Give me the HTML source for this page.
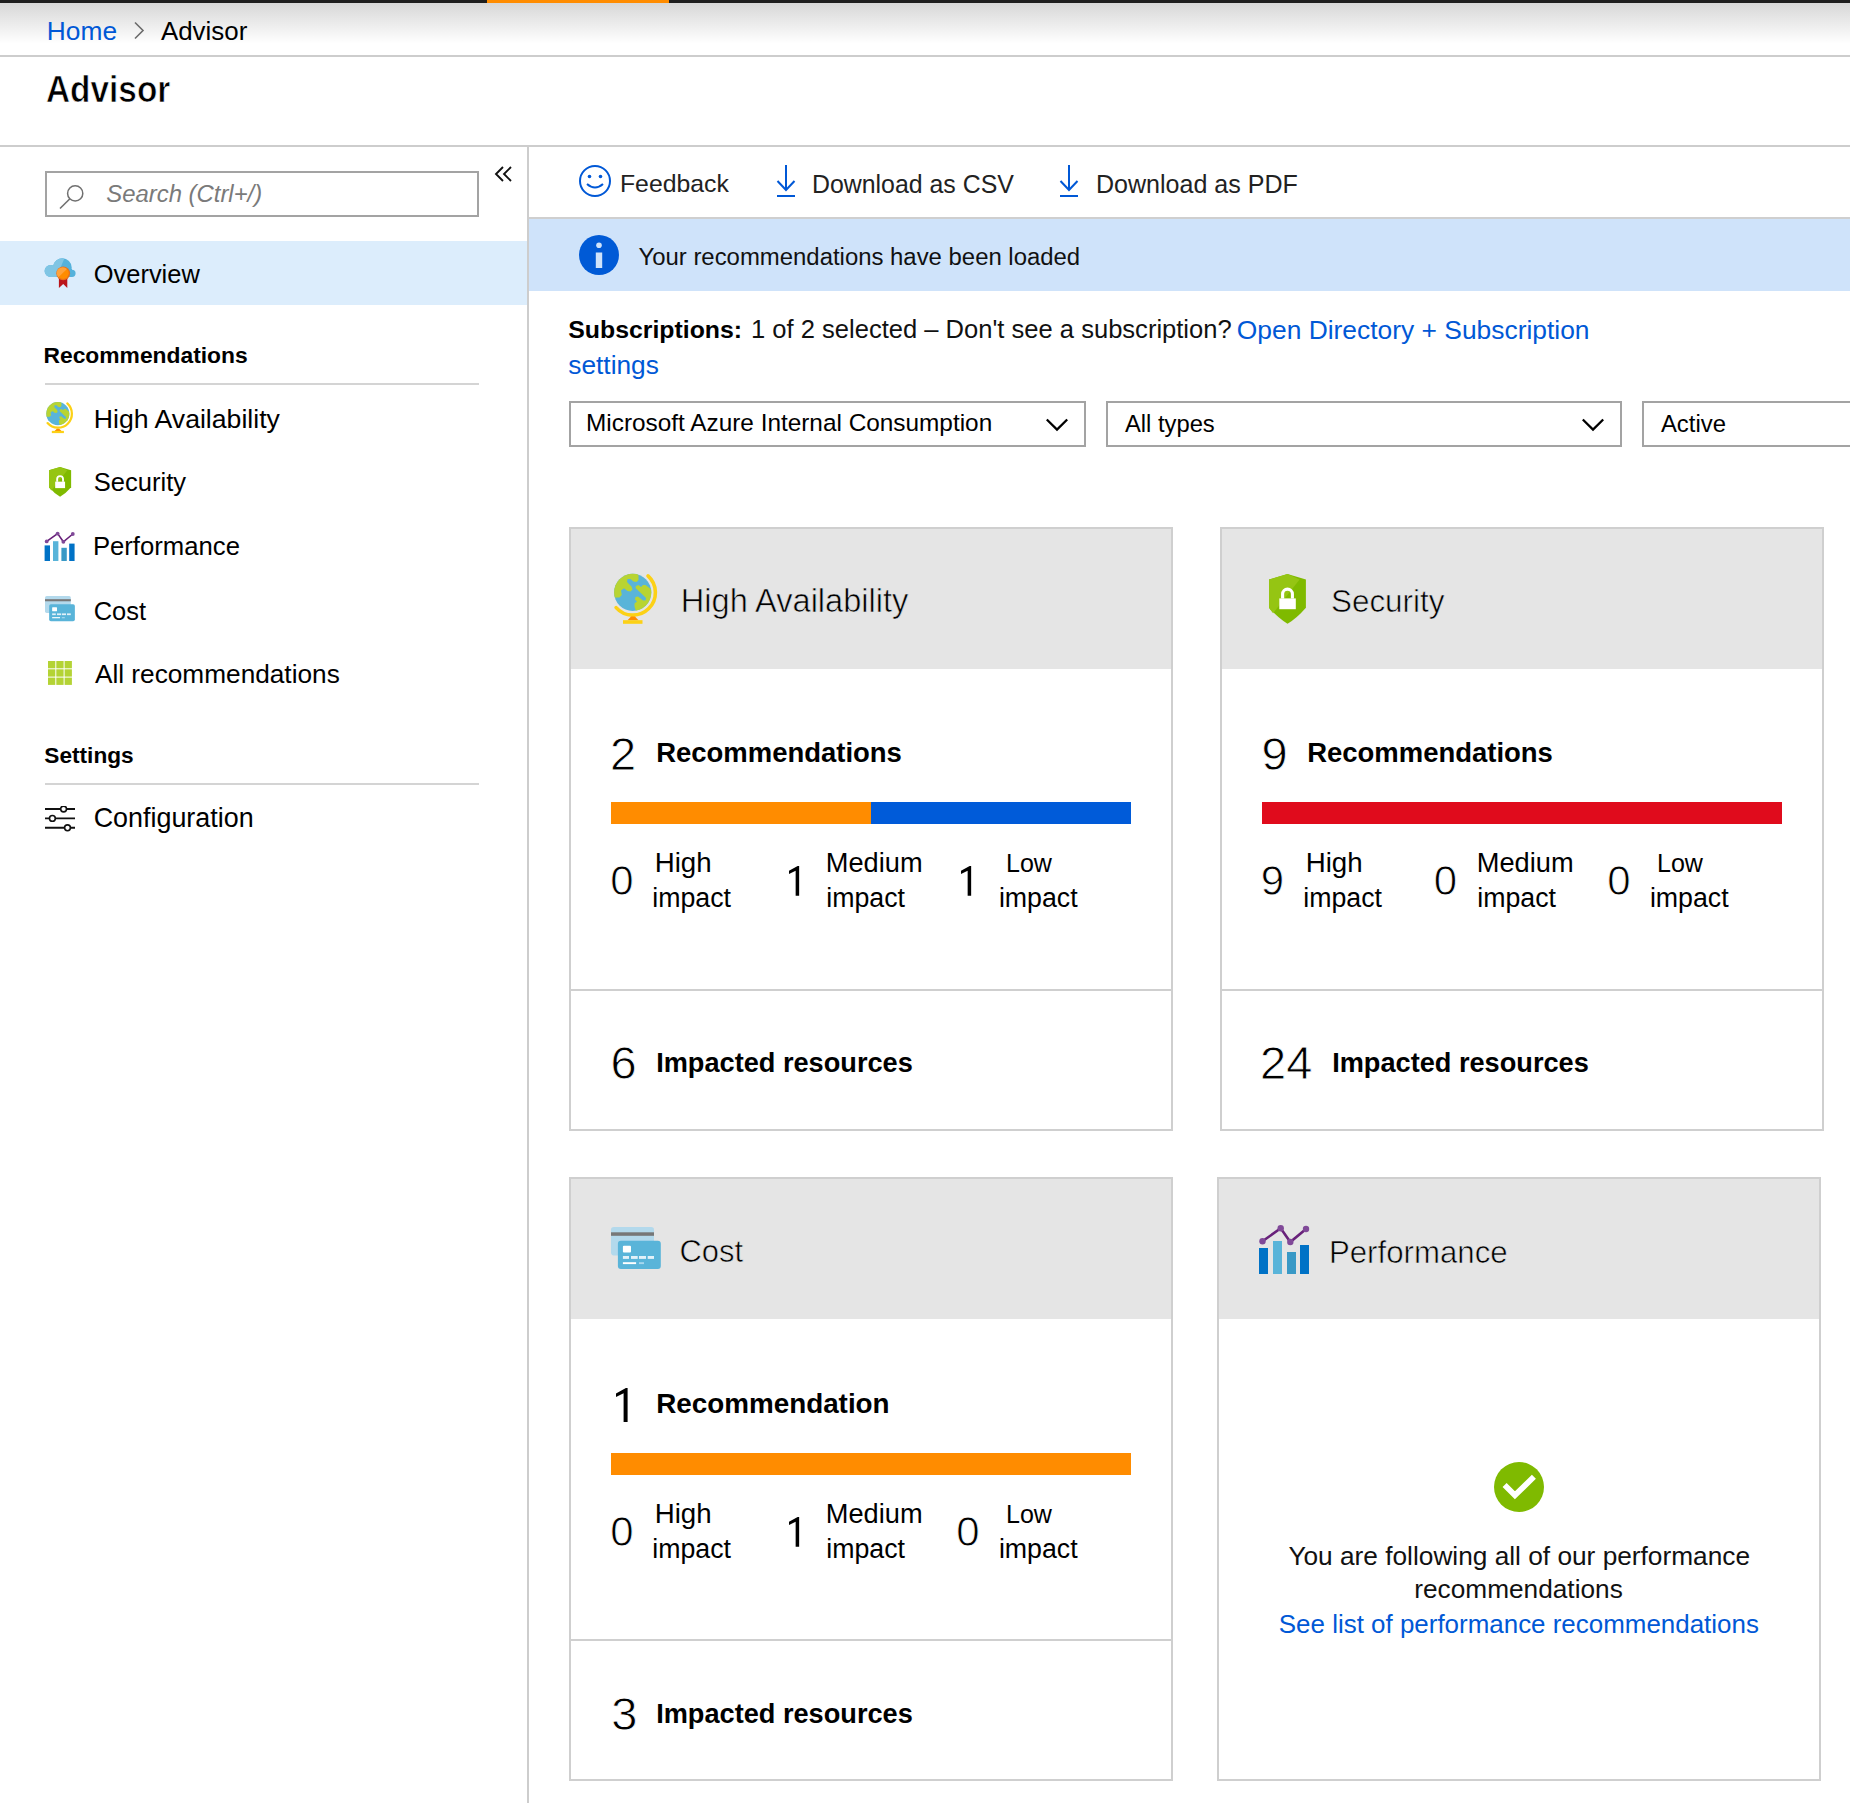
<!DOCTYPE html>
<html><head><meta charset="utf-8"><style>
html,body{margin:0;padding:0;background:#fff;width:1850px;height:1803px;overflow:hidden;}
body{position:relative;font-family:"Liberation Sans",sans-serif;}
div{position:absolute;}
.t{white-space:nowrap;line-height:1;}
</style></head><body>
<div style="left:0px;top:0px;width:1850px;height:3px;background:#1e1e1e;"></div>
<div style="left:487px;top:0px;width:182px;height:3px;background:#ff8c00;"></div>
<div style="left:0px;top:3px;width:1850px;height:52px;background:linear-gradient(#d7d7d7,#ffffff 78%);"></div>
<div style="left:0px;top:55px;width:1850px;height:2px;background:#cdcdcd;"></div>
<div style="left:0px;top:145px;width:1850px;height:2px;background:#cdcdcd;"></div>
<div style="left:527px;top:147px;width:2px;height:1656px;background:#cdcdcd;"></div>
<div class="t" style="left:46.84px;top:17.70px;font-size:26.33px;color:#0058d6;">Home</div>
<svg style="position:absolute;left:133px;top:21px" width="12" height="19" viewBox="0 0 12 19"><path d="M2 1.5 L10 9.5 L2 17.5" fill="none" stroke="#6b6b6b" stroke-width="1.6"/></svg>
<div class="t" style="left:160.95px;top:18.66px;font-size:25.9px;color:#000;">Advisor</div>
<div class="t" style="left:46.17px;top:71.51px;font-size:36px;font-weight:700;color:#000;-webkit-text-stroke:0.7px #fff;transform:scaleX(0.9272);transform-origin:0 0;">Advisor</div>
<div style="left:45px;top:171px;width:434px;height:46px;background:#fff;border:2px solid #a3a3a3;box-sizing:border-box;"></div>
<svg style="position:absolute;left:56.5px;top:182px" width="30" height="30" viewBox="0 0 30 30"><circle cx="18.2" cy="11.4" r="7.6" fill="none" stroke="#707070" stroke-width="1.5"/><path d="M12.9 16.7 L3 26.5" stroke="#707070" stroke-width="1.6"/></svg>
<div class="t" style="left:106.32px;top:182.27px;font-size:23.89px;font-style:italic;color:#7a7a7a;">Search (Ctrl+/)</div>
<svg style="position:absolute;left:493px;top:164.5px" width="22" height="20" viewBox="0 0 22 20"><path d="M10 2 L3 9 L10 16 M18 2 L11 9 L18 16" fill="none" stroke="#111" stroke-width="1.9"/></svg>
<div style="left:0px;top:241px;width:527px;height:64px;background:#dcedfc;"></div>
<svg style="position:absolute;left:44px;top:257px;overflow:visible" width="32.00" height="32.00" viewBox="0 0 32 32"><defs><clipPath id="ovc"><circle cx="6.6" cy="13.9" r="6"/><circle cx="18.4" cy="10.5" r="9.3"/><circle cx="28" cy="16.3" r="3.6"/><rect x="6.6" y="12" width="21.4" height="7.9"/></clipPath></defs><g clip-path="url(#ovc)"><rect x="0" y="0" width="32" height="20" fill="#55b2db"/><path d="M0 0 L21 0 L12.5 20 L0 20 Z" fill="#7fc5e4"/></g><path d="M14.9 21 L14.9 31 L19.2 27 L23.3 31 L23.3 21 Z" fill="#ba141a"/><circle cx="19.2" cy="16.3" r="6.9" fill="#e8701a"/><circle cx="19.2" cy="16.3" r="5.6" fill="#ff8c00"/><path d="M14.3 20.2 A5.6 5.6 0 0 1 23 12.1 Z" fill="#ffa23a"/></svg>
<div class="t" style="left:93.79px;top:262.44px;font-size:25.45px;color:#000;">Overview</div>
<div class="t" style="left:43.47px;top:343.65px;font-size:22.84px;font-weight:700;color:#000;">Recommendations</div>
<div style="left:45px;top:383px;width:434px;height:2px;background:#d4d4d4;"></div>
<svg style="position:absolute;left:44.76px;top:400.7px;overflow:visible" width="29.76" height="33.48" viewBox="0 0 48 54"><defs><clipPath id="gcs"><circle cx="20.7" cy="20.4" r="18.6"/></clipPath></defs><circle cx="20.7" cy="20.4" r="18.6" fill="#59b4d9"/><g clip-path="url(#gcs)" fill="#b8d432"><path d="M-1 27 L0 13 L6 4 L14 0 L24 -1 L26.5 3 L26.5 8 L24.5 10 L21.5 9.5 L18.5 7 L15.5 7 L15 10 L19.5 14.5 L20.5 17.5 L18.5 19.5 L15.5 19 L12 16.3 L9 18.5 L9.8 23 L7.5 25.5 L4 25.5 Z"/><path d="M23.5 16 L24 14 L26.5 13 L29 15 L31 13 L33.5 13 L40 18 L41 26 L38 33 L32 39 L24.5 41 L22.5 34.5 L22.5 31.5 L25 29.5 L23 27.5 L23.5 25 L26 24.5 L31 28.5 L33.5 28.5 L34 26 L32 24 Z"/></g><path d="M36.0 3.95 A22.5 22.5 0 1 1 4.1 35.6" fill="none" stroke="#fcd116" stroke-width="3.6" stroke-linecap="round"/><path d="M19 44.6 L23 44.6 L26.5 48.3 L15.5 48.3 Z" fill="#ff8c00"/><rect x="11" y="48.2" width="19.5" height="3.6" fill="#fcd116"/></svg>
<div class="t" style="left:93.81px;top:405.73px;font-size:26.65px;color:#000;">High Availability</div>
<svg style="position:absolute;left:49px;top:466.7px;overflow:visible" width="22.20" height="30.00" viewBox="0 0 37 50"><path d="M18.5 0 L36.9 5.6 L36.9 33.7 Q28 44 18.5 49.8 Q9 44 0 33.7 L0 5.6 Z" fill="#7fba00"/><path d="M0 5.6 L18.5 0 L30.6 5.6 L4.1 39.2 Q1.8 36.5 0 33.7 Z" fill="#95c513"/><rect x="10.3" y="24.4" width="16.5" height="10.8" fill="#fff"/><path d="M13.6 24.6 V20 A4.9 4.9 0 0 1 23.4 20 V24.6" fill="none" stroke="#fff" stroke-width="3.1"/></svg>
<div class="t" style="left:93.84px;top:469.88px;font-size:25.53px;color:#000;">Security</div>
<svg style="position:absolute;left:44.1px;top:531.1px;overflow:visible" width="31.20" height="30.00" viewBox="0 0 52 50"><rect x="1" y="24" width="9" height="26" fill="#0072c6"/><rect x="15" y="17" width="9" height="33" fill="#59b4d9"/><rect x="29" y="28" width="9" height="22" fill="#3999c6"/><rect x="42" y="21" width="9" height="29" fill="#0072c6"/><path d="M4.5 17.3 L22.7 4.3 L32.3 18 L48 5" fill="none" stroke="#68217a" stroke-width="2.6"/><circle cx="4.5" cy="17.3" r="3.2" fill="#804998"/><circle cx="22.7" cy="4.3" r="3.2" fill="#804998"/><circle cx="32.3" cy="18" r="3.2" fill="#804998"/><circle cx="48" cy="5" r="3.2" fill="#804998"/></svg>
<div class="t" style="left:92.89px;top:533.84px;font-size:25.69px;color:#000;">Performance</div>
<svg style="position:absolute;left:45px;top:596px;overflow:visible" width="30.00" height="25.20" viewBox="0 0 50 42"><rect x="0" y="0" width="43" height="28.4" rx="2.8" fill="#b3d9ec"/><rect x="0" y="5.3" width="43" height="3.5" fill="#777"/><rect x="6.9" y="13.8" width="42.9" height="28.2" rx="3" fill="#59b4d9"/><rect x="11.9" y="18.7" width="8.1" height="6.8" rx="1" fill="#fff"/><g fill="#e2f1f9"><rect x="11.9" y="29" width="6.1" height="2.9"/><rect x="20" y="29" width="6.7" height="2.9"/><rect x="28" y="29" width="7" height="2.9"/><rect x="36.7" y="29" width="6.3" height="2.9"/></g><rect x="11.9" y="35.2" width="13.2" height="1.9" fill="#fff"/><rect x="28" y="35.2" width="5" height="1.9" fill="#a8d8ee"/></svg>
<div class="t" style="left:93.71px;top:598.75px;font-size:25.44px;color:#000;">Cost</div>
<svg style="position:absolute;left:48px;top:661.3px" width="25" height="25" viewBox="0 0 25 25"><rect x="0.0" y="0.0" width="7.3" height="7.3" fill="#b4d335"/><rect x="0.0" y="8.3" width="7.3" height="7.3" fill="#b4d335"/><rect x="0.0" y="16.6" width="7.3" height="7.3" fill="#b4d335"/><rect x="8.3" y="0.0" width="7.3" height="7.3" fill="#b4d335"/><rect x="8.3" y="8.3" width="7.3" height="7.3" fill="#b4d335"/><rect x="8.3" y="16.6" width="7.3" height="7.3" fill="#b4d335"/><rect x="16.6" y="0.0" width="7.3" height="7.3" fill="#b4d335"/><rect x="16.6" y="8.3" width="7.3" height="7.3" fill="#b4d335"/><rect x="16.6" y="16.6" width="7.3" height="7.3" fill="#b4d335"/></svg>
<div class="t" style="left:94.95px;top:661.49px;font-size:26.22px;color:#000;">All recommendations</div>
<div class="t" style="left:44.35px;top:744.02px;font-size:22.65px;font-weight:700;color:#000;">Settings</div>
<div style="left:45px;top:783px;width:434px;height:2px;background:#d4d4d4;"></div>
<svg style="position:absolute;left:45px;top:806px" width="30" height="30" viewBox="0 0 30 30"><path d="M0 3 H30 M0 12.4 H30 M0 21.8 H30" stroke="#111" stroke-width="1.9"/><circle cx="18.6" cy="3" r="2.9" fill="#fff" stroke="#111" stroke-width="1.6"/><circle cx="7.4" cy="12.4" r="2.9" fill="#fff" stroke="#111" stroke-width="1.6"/><circle cx="22.5" cy="21.8" r="2.9" fill="#fff" stroke="#111" stroke-width="1.6"/></svg>
<div class="t" style="left:93.63px;top:804.71px;font-size:26.91px;color:#000;">Configuration</div>
<svg style="position:absolute;left:578px;top:164px" width="34" height="34" viewBox="0 0 34 34"><circle cx="17" cy="17" r="15" fill="none" stroke="#0058d6" stroke-width="2"/><circle cx="11.5" cy="12.5" r="1.8" fill="#0058d6"/><circle cx="22.5" cy="12.5" r="1.8" fill="#0058d6"/><path d="M9 20 Q17 27 25 20" fill="none" stroke="#0058d6" stroke-width="2"/></svg>
<div class="t" style="left:619.97px;top:171.99px;font-size:24.8px;color:#222;">Feedback</div>
<svg style="position:absolute;left:776px;top:165px" width="20" height="33" viewBox="0 0 20 33"><path d="M10 0 V25 M1.5 16 L10 25 L18.5 16 M1 31 H19" fill="none" stroke="#0058d6" stroke-width="2"/></svg>
<div class="t" style="left:811.96px;top:171.92px;font-size:24.89px;color:#222;">Download as CSV</div>
<svg style="position:absolute;left:1059px;top:165px" width="20" height="33" viewBox="0 0 20 33"><path d="M10 0 V25 M1.5 16 L10 25 L18.5 16 M1 31 H19" fill="none" stroke="#0058d6" stroke-width="2"/></svg>
<div class="t" style="left:1095.95px;top:171.78px;font-size:25.05px;color:#222;">Download as PDF</div>
<div style="left:529px;top:217px;width:1321px;height:2px;background:#cfcfcf;"></div>
<div style="left:529px;top:219px;width:1321px;height:72px;background:#cfe3fa;"></div>
<svg style="position:absolute;left:579px;top:235px" width="40" height="40" viewBox="0 0 40 40"><circle cx="20" cy="20" r="20" fill="#005ad6"/><circle cx="20" cy="10.3" r="2.8" fill="#cfe3fa"/><rect x="16.8" y="17.5" width="6.4" height="15.5" fill="#cfe3fa"/></svg>
<div class="t" style="left:638.47px;top:245.14px;font-size:23.92px;color:#111;">Your recommendations have been loaded</div>
<div class="t" style="left:568.28px;top:317.96px;font-size:24.84px;font-weight:700;color:#000;">Subscriptions:</div>
<div class="t" style="left:751.05px;top:317.36px;font-size:25.55px;color:#111;">1 of 2 selected – Don't see a subscription?</div>
<div class="t" style="left:1236.75px;top:316.64px;font-size:26.4px;color:#0058d6;">Open Directory + Subscription</div>
<div class="t" style="left:568.27px;top:351.73px;font-size:26.29px;color:#0058d6;">settings</div>
<div style="left:569px;top:401px;width:517px;height:46px;background:#fff;border:2px solid #a3a3a3;box-sizing:border-box;"></div>
<div class="t" style="left:586.00px;top:411.36px;font-size:24.37px;color:#000;">Microsoft Azure Internal Consumption</div>
<svg style="position:absolute;left:1046px;top:418px" width="22" height="14" viewBox="0 0 22 14"><path d="M0.8 1.5 L11 11.6 L21.2 1.5" fill="none" stroke="#000" stroke-width="2.3"/></svg>
<div style="left:1106px;top:401px;width:516px;height:46px;background:#fff;border:2px solid #a3a3a3;box-sizing:border-box;"></div>
<div class="t" style="left:1124.95px;top:411.87px;font-size:23.77px;color:#000;">All types</div>
<svg style="position:absolute;left:1582px;top:418px" width="22" height="14" viewBox="0 0 22 14"><path d="M0.8 1.5 L11 11.6 L21.2 1.5" fill="none" stroke="#000" stroke-width="2.3"/></svg>
<div style="left:1642px;top:401px;width:260px;height:46px;background:#fff;border:2px solid #a3a3a3;box-sizing:border-box;"></div>
<div class="t" style="left:1660.95px;top:411.77px;font-size:23.88px;color:#000;">Active</div>
<div style="left:569px;top:527px;width:604px;height:604px;background:#fff;border:2px solid #cfcfcf;box-sizing:border-box;"></div>
<div style="left:571px;top:529px;width:600px;height:139.5px;background:#e5e5e5;"></div>
<svg style="position:absolute;left:612px;top:572px;overflow:visible" width="48.00" height="54.00" viewBox="0 0 48 54"><defs><clipPath id="gcc"><circle cx="20.7" cy="20.4" r="18.6"/></clipPath></defs><circle cx="20.7" cy="20.4" r="18.6" fill="#59b4d9"/><g clip-path="url(#gcc)" fill="#b8d432"><path d="M-1 27 L0 13 L6 4 L14 0 L24 -1 L26.5 3 L26.5 8 L24.5 10 L21.5 9.5 L18.5 7 L15.5 7 L15 10 L19.5 14.5 L20.5 17.5 L18.5 19.5 L15.5 19 L12 16.3 L9 18.5 L9.8 23 L7.5 25.5 L4 25.5 Z"/><path d="M23.5 16 L24 14 L26.5 13 L29 15 L31 13 L33.5 13 L40 18 L41 26 L38 33 L32 39 L24.5 41 L22.5 34.5 L22.5 31.5 L25 29.5 L23 27.5 L23.5 25 L26 24.5 L31 28.5 L33.5 28.5 L34 26 L32 24 Z"/></g><path d="M36.0 3.95 A22.5 22.5 0 1 1 4.1 35.6" fill="none" stroke="#fcd116" stroke-width="3.6" stroke-linecap="round"/><path d="M19 44.6 L23 44.6 L26.5 48.3 L15.5 48.3 Z" fill="#ff8c00"/><rect x="11" y="48.2" width="19.5" height="3.6" fill="#fcd116"/></svg>
<div class="t" style="left:680.83px;top:585.40px;font-size:32.59px;color:#000;-webkit-text-stroke:0.6px #e5e5e5;">High Availability</div>
<div class="t" style="left:610.04px;top:730.19px;font-size:47px;color:#000;-webkit-text-stroke:0.8px #fff">2</div>
<div class="t" style="left:656.16px;top:739.13px;font-size:27.47px;font-weight:700;color:#000;">Recommendations</div>
<div class="t" style="left:610.36px;top:860.03px;font-size:42px;color:#000;-webkit-text-stroke:0.8px #fff">0</div>
<div class="t" style="left:654.73px;top:848.56px;font-size:27.68px;color:#000;">High</div>
<div class="t" style="left:652.21px;top:884.85px;font-size:26.74px;color:#000;">impact</div>
<svg style="position:absolute;left:788.9px;top:866px;overflow:visible" width="10.51" height="29.78" viewBox="0 0 12 34"><path d="M0 5.5 L9.9 0 L11.6 0 L11.6 34 L7.6 34 L7.6 5.3 L0 9.1 Z" fill="#000"/></svg>
<div class="t" style="left:825.77px;top:848.94px;font-size:27.23px;color:#000;">Medium</div>
<div class="t" style="left:826.21px;top:884.85px;font-size:26.74px;color:#000;">impact</div>
<svg style="position:absolute;left:961.4px;top:866px;overflow:visible" width="10.51" height="29.78" viewBox="0 0 12 34"><path d="M0 5.5 L9.9 0 L11.6 0 L11.6 34 L7.6 34 L7.6 5.3 L0 9.1 Z" fill="#000"/></svg>
<div class="t" style="left:1005.94px;top:850.77px;font-size:25.07px;color:#000;">Low</div>
<div class="t" style="left:998.91px;top:884.85px;font-size:26.74px;color:#000;">impact</div>
<div style="left:571px;top:989px;width:600px;height:2px;background:#cfcfcf;"></div>
<div class="t" style="left:610.61px;top:1039.19px;font-size:47px;color:#000;-webkit-text-stroke:0.8px #fff">6</div>
<div class="t" style="left:656.18px;top:1049.39px;font-size:27.17px;font-weight:700;color:#000;">Impacted resources</div>
<div style="left:611px;top:802px;width:260px;height:22px;background:#ff8c00;"></div>
<div style="left:871px;top:802px;width:260px;height:22px;background:#005bd9;"></div>
<div style="left:1220px;top:527px;width:604px;height:604px;background:#fff;border:2px solid #cfcfcf;box-sizing:border-box;"></div>
<div style="left:1222px;top:529px;width:600px;height:139.5px;background:#e5e5e5;"></div>
<svg style="position:absolute;left:1268.9px;top:573.8px;overflow:visible" width="37.00" height="50.00" viewBox="0 0 37 50"><path d="M18.5 0 L36.9 5.6 L36.9 33.7 Q28 44 18.5 49.8 Q9 44 0 33.7 L0 5.6 Z" fill="#7fba00"/><path d="M0 5.6 L18.5 0 L30.6 5.6 L4.1 39.2 Q1.8 36.5 0 33.7 Z" fill="#95c513"/><rect x="10.3" y="24.4" width="16.5" height="10.8" fill="#fff"/><path d="M13.6 24.6 V20 A4.9 4.9 0 0 1 23.4 20 V24.6" fill="none" stroke="#fff" stroke-width="3.1"/></svg>
<div class="t" style="left:1330.97px;top:586.39px;font-size:31.42px;color:#000;-webkit-text-stroke:0.6px #e5e5e5;">Security</div>
<div class="t" style="left:1261.60px;top:730.19px;font-size:47px;color:#000;-webkit-text-stroke:0.8px #fff">9</div>
<div class="t" style="left:1307.16px;top:739.13px;font-size:27.47px;font-weight:700;color:#000;">Recommendations</div>
<div class="t" style="left:1260.63px;top:860.03px;font-size:42px;color:#000;-webkit-text-stroke:0.8px #fff">9</div>
<div class="t" style="left:1305.73px;top:848.56px;font-size:27.68px;color:#000;">High</div>
<div class="t" style="left:1303.21px;top:884.85px;font-size:26.74px;color:#000;">impact</div>
<div class="t" style="left:1433.86px;top:860.03px;font-size:42px;color:#000;-webkit-text-stroke:0.8px #fff">0</div>
<div class="t" style="left:1476.77px;top:848.94px;font-size:27.23px;color:#000;">Medium</div>
<div class="t" style="left:1477.21px;top:884.85px;font-size:26.74px;color:#000;">impact</div>
<div class="t" style="left:1607.36px;top:860.03px;font-size:42px;color:#000;-webkit-text-stroke:0.8px #fff">0</div>
<div class="t" style="left:1656.94px;top:850.77px;font-size:25.07px;color:#000;">Low</div>
<div class="t" style="left:1649.91px;top:884.85px;font-size:26.74px;color:#000;">impact</div>
<div style="left:1222px;top:989px;width:600px;height:2px;background:#cfcfcf;"></div>
<div class="t" style="left:1260.04px;top:1039.19px;font-size:47px;color:#000;-webkit-text-stroke:0.8px #fff">24</div>
<div class="t" style="left:1332.18px;top:1049.39px;font-size:27.17px;font-weight:700;color:#000;">Impacted resources</div>
<div style="left:1262px;top:802px;width:520px;height:22px;background:#e00b1c;"></div>
<div style="left:569px;top:1177px;width:604px;height:604px;background:#fff;border:2px solid #cfcfcf;box-sizing:border-box;"></div>
<div style="left:571px;top:1179px;width:600px;height:139.5px;background:#e5e5e5;"></div>
<svg style="position:absolute;left:611px;top:1227px;overflow:visible" width="50.00" height="42.00" viewBox="0 0 50 42"><rect x="0" y="0" width="43" height="28.4" rx="2.8" fill="#b3d9ec"/><rect x="0" y="5.3" width="43" height="3.5" fill="#777"/><rect x="6.9" y="13.8" width="42.9" height="28.2" rx="3" fill="#59b4d9"/><rect x="11.9" y="18.7" width="8.1" height="6.8" rx="1" fill="#fff"/><g fill="#e2f1f9"><rect x="11.9" y="29" width="6.1" height="2.9"/><rect x="20" y="29" width="6.7" height="2.9"/><rect x="28" y="29" width="7" height="2.9"/><rect x="36.7" y="29" width="6.3" height="2.9"/></g><rect x="11.9" y="35.2" width="13.2" height="1.9" fill="#fff"/><rect x="28" y="35.2" width="5" height="1.9" fill="#a8d8ee"/></svg>
<div class="t" style="left:679.43px;top:1236.81px;font-size:30.92px;color:#000;-webkit-text-stroke:0.6px #e5e5e5;">Cost</div>
<svg style="position:absolute;left:616.1px;top:1387.9px;overflow:visible" width="12.00" height="34.00" viewBox="0 0 12 34"><path d="M0 5.5 L9.9 0 L11.6 0 L11.6 34 L7.6 34 L7.6 5.3 L0 9.1 Z" fill="#000"/></svg>
<div class="t" style="left:656.14px;top:1389.83px;font-size:27.83px;font-weight:700;color:#000;">Recommendation</div>
<div class="t" style="left:610.36px;top:1511.03px;font-size:42px;color:#000;-webkit-text-stroke:0.8px #fff">0</div>
<div class="t" style="left:654.73px;top:1499.56px;font-size:27.68px;color:#000;">High</div>
<div class="t" style="left:652.21px;top:1535.85px;font-size:26.74px;color:#000;">impact</div>
<svg style="position:absolute;left:788.9px;top:1517px;overflow:visible" width="10.51" height="29.78" viewBox="0 0 12 34"><path d="M0 5.5 L9.9 0 L11.6 0 L11.6 34 L7.6 34 L7.6 5.3 L0 9.1 Z" fill="#000"/></svg>
<div class="t" style="left:825.77px;top:1499.94px;font-size:27.23px;color:#000;">Medium</div>
<div class="t" style="left:826.21px;top:1535.85px;font-size:26.74px;color:#000;">impact</div>
<div class="t" style="left:956.36px;top:1511.03px;font-size:42px;color:#000;-webkit-text-stroke:0.8px #fff">0</div>
<div class="t" style="left:1005.94px;top:1501.77px;font-size:25.07px;color:#000;">Low</div>
<div class="t" style="left:998.91px;top:1535.85px;font-size:26.74px;color:#000;">impact</div>
<div style="left:571px;top:1639px;width:600px;height:2px;background:#cfcfcf;"></div>
<div class="t" style="left:611.21px;top:1690.19px;font-size:47px;color:#000;-webkit-text-stroke:0.8px #fff">3</div>
<div class="t" style="left:656.18px;top:1700.39px;font-size:27.17px;font-weight:700;color:#000;">Impacted resources</div>
<div style="left:611px;top:1453px;width:520px;height:22px;background:#ff8c00;"></div>
<div style="left:1217px;top:1177px;width:604px;height:604px;background:#fff;border:2px solid #cfcfcf;box-sizing:border-box;"></div>
<div style="left:1219px;top:1179px;width:600px;height:139.5px;background:#e5e5e5;"></div>
<svg style="position:absolute;left:1258px;top:1224px;overflow:visible" width="52.00" height="50.00" viewBox="0 0 52 50"><rect x="1" y="24" width="9" height="26" fill="#0072c6"/><rect x="15" y="17" width="9" height="33" fill="#59b4d9"/><rect x="29" y="28" width="9" height="22" fill="#3999c6"/><rect x="42" y="21" width="9" height="29" fill="#0072c6"/><path d="M4.5 17.3 L22.7 4.3 L32.3 18 L48 5" fill="none" stroke="#68217a" stroke-width="2.6"/><circle cx="4.5" cy="17.3" r="3.2" fill="#804998"/><circle cx="22.7" cy="4.3" r="3.2" fill="#804998"/><circle cx="32.3" cy="18" r="3.2" fill="#804998"/><circle cx="48" cy="5" r="3.2" fill="#804998"/></svg>
<div class="t" style="left:1328.94px;top:1236.56px;font-size:31.22px;color:#000;-webkit-text-stroke:0.6px #e5e5e5;">Performance</div>
<svg style="position:absolute;left:1494px;top:1461.6px" width="50" height="50" viewBox="0 0 50 50"><circle cx="25" cy="25" r="25" fill="#7fba00"/><path d="M10.6 23 L20.9 33.3 L39.9 14.7" fill="none" stroke="#fff" stroke-width="5.7"/></svg>
<div class="t" style="left:1288.42px;top:1543.17px;font-size:26.25px;color:#111;">You are following all of our performance</div>
<div class="t" style="left:1414.26px;top:1575.77px;font-size:26.24px;color:#111;">recommendations</div>
<div class="t" style="left:1278.82px;top:1612.23px;font-size:25.94px;color:#0058d6;">See list of performance recommendations</div>
</body></html>
